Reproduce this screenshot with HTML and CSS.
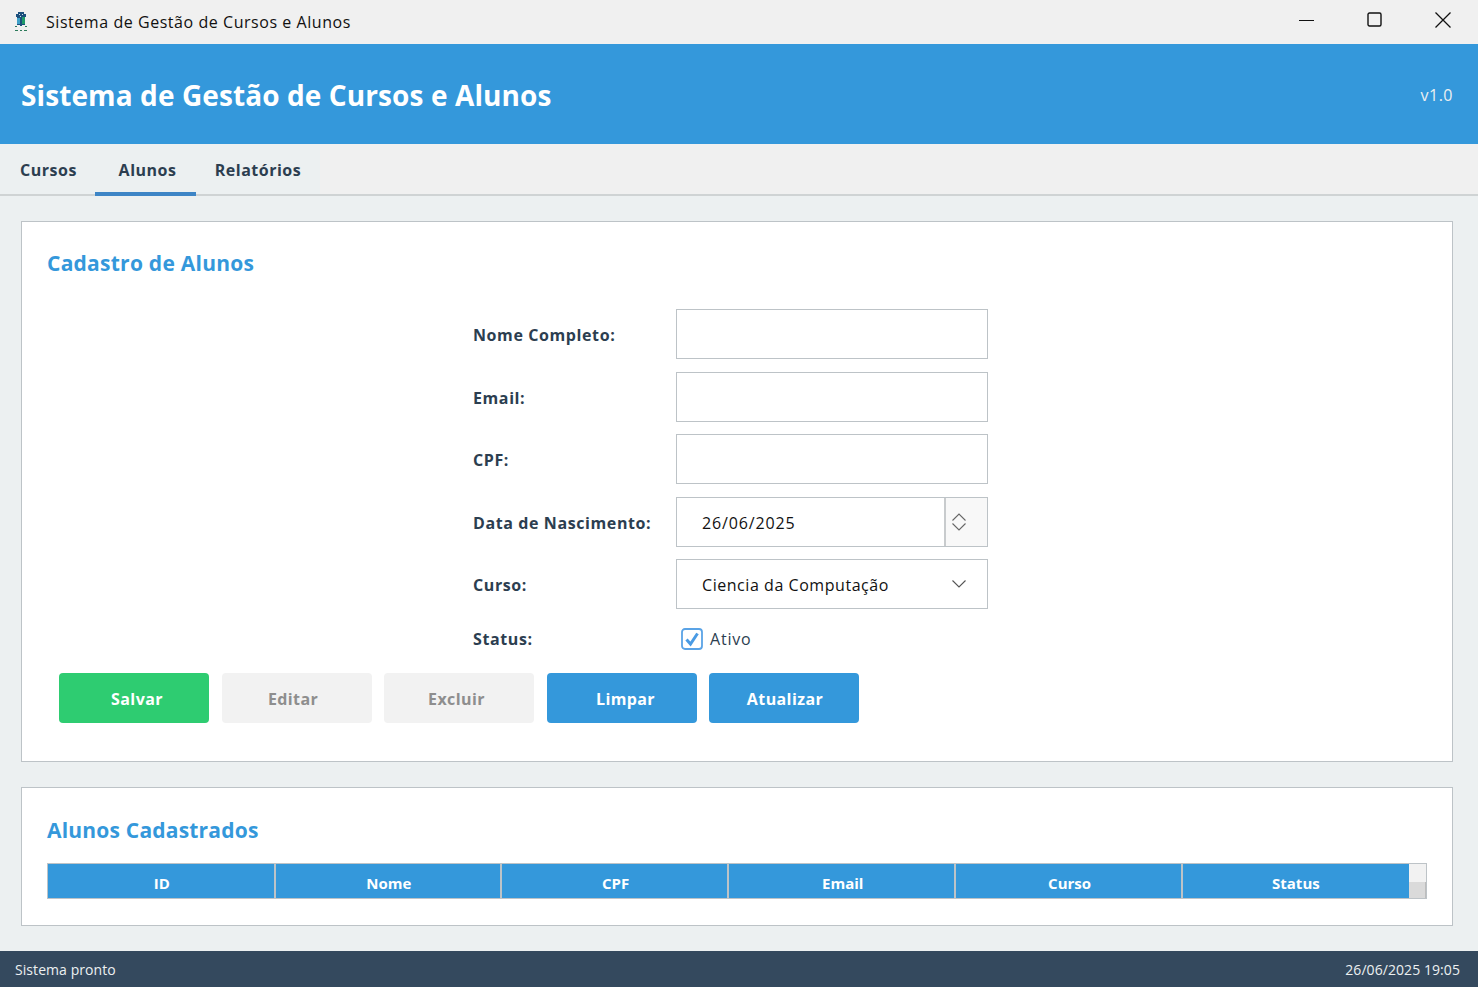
FILE: index.html
```html
<!DOCTYPE html>
<html lang="pt-BR">
<head>
    <meta charset="utf-8">
    <title>Sistema de Gestão de Cursos e Alunos</title>
    <link rel="stylesheet" href="styles.css">
</head>
<body>
    <div class="titlebar">
        <svg class="appicon" width="14" height="20" viewBox="0 0 14 20">
            <path d="M4 0h6v2h2v3h-1v8H8v1H6v-1H3V5H2V2h2z" fill="#1c4f7c"/>
            <path d="M3 6h3v6H3z" fill="#3fa0c8"/>
            <path d="M8 5h3v7H8z" fill="#1f9a6a"/>
            <path d="M5 2h1v1H5zM8 2h1v1H8zM6 4h1v1H6z" fill="#cfe0ea"/>
            <path d="M1 14h2v1H1zM11 14h2v1h-2zM1 18h3v1H1zM6 18h2v1H6zM10 18h3v1h-3z" fill="#2c7a5a"/>
        </svg>
        <span class="titlebar-text">Sistema de Gestão de Cursos e Alunos</span>
        <div class="winbuttons">
            <svg width="16" height="16" viewBox="0 0 16 16"><path d="M0 8.5h15" stroke="#111" fill="none"/></svg>
            <svg width="16" height="16" viewBox="0 0 16 16"><rect x="1" y="1" width="13" height="13" rx="1.5" stroke="#111" stroke-width="1.4" fill="none"/></svg>
            <svg width="16" height="16" viewBox="0 0 16 16"><path d="M0.5 0.5l15 15M15.5 0.5l-15 15" stroke="#111" stroke-width="1.3" fill="none"/></svg>
        </div>
    </div>

    <header class="header">
        <h1>Sistema de Gestão de Cursos e Alunos</h1>
        <span class="version">v1.0</span>
    </header>

    <nav class="tabs">
        <div class="tabgroup">
            <a class="tab tab-cursos">Cursos</a>
            <a class="tab tab-alunos active">Alunos</a>
            <a class="tab tab-relatorios">Relatórios</a>
        </div>
    </nav>

    <main class="content">
        <section class="card card-form">
            <h2>Cadastro de Alunos</h2>
            <div class="form">
                <label>Nome Completo:</label>
                <div class="input"></div>
                <label>Email:</label>
                <div class="input"></div>
                <label>CPF:</label>
                <div class="input"></div>
                <label>Data de Nascimento:</label>
                <div class="input input-date">
                    <span class="value">26/06/2025</span>
                    <span class="spin">
                        <svg width="16" height="20" viewBox="0 0 16 20"><path d="M1.5 8.5L8 2l6.5 6.5M1.5 11.5L8 18l6.5-6.5" stroke="#666" stroke-width="1.1" fill="none"/></svg>
                    </span>
                </div>
                <label>Curso:</label>
                <div class="input input-select">
                    <span class="value">Ciencia da Computação</span>
                    <svg width="16" height="10" viewBox="0 0 16 10"><path d="M1.5 1.5L8 8l6.5-6.5" stroke="#555" stroke-width="1.1" fill="none"/></svg>
                </div>
                <label class="label-status">Status:</label>
                <div class="check">
                    <svg width="22" height="22" viewBox="0 0 22 22">
                        <rect x="1" y="1" width="20" height="20" rx="3" fill="#fff" stroke="#5aa3e6" stroke-width="1.8"/>
                        <path d="M5.5 11.5l4 4.5 7-10.5" stroke="#4a9be4" stroke-width="3" fill="none"/>
                    </svg>
                    <span>Ativo</span>
                </div>
            </div>
            <div class="buttons">
                <button class="btn btn-green btn-salvar">Salvar</button>
                <button class="btn btn-off btn-editar">Editar</button>
                <button class="btn btn-off btn-excluir">Excluir</button>
                <button class="btn btn-blue btn-limpar">Limpar</button>
                <button class="btn btn-blue btn-atualizar">Atualizar</button>
            </div>
        </section>

        <section class="card card-table">
            <h2>Alunos Cadastrados</h2>
            <div class="tablehead">
                <div class="th">ID</div>
                <div class="th">Nome</div>
                <div class="th">CPF</div>
                <div class="th">Email</div>
                <div class="th">Curso</div>
                <div class="th">Status</div>
                <div class="scrollcorner"><span></span></div>
            </div>
        </section>
    </main>

    <footer class="statusbar">
        <span>Sistema pronto</span>
        <span>26/06/2025 19:05</span>
    </footer>
</body>
</html>
```

FILE: styles.css
```css
* {
    box-sizing: border-box;
}

html, body {
    margin: 0;
    height: 987px;
    overflow: hidden;
}

body {
    display: flex;
    flex-direction: column;
    font-family: "Open Sans", "Noto Sans", sans-serif;
    background-color: #ECF0F1;
    color: #2C3E50;
}

.titlebar {
    height: 44px;
    flex: none;
    display: flex;
    align-items: center;
    background-color: #F0F0F0;
    color: #111;
    font-size: 16px;
}

.appicon {
    margin-left: 14px;
}

.titlebar-text {
    margin-left: 18px;
    padding-bottom: 1px;
    letter-spacing: 0.55px;
}

.winbuttons {
    margin-left: auto;
    margin-right: 27px;
    display: flex;
    align-items: center;
    gap: 52px;
    padding-bottom: 4px;
}

.header {
    height: 100px;
    flex: none;
    display: flex;
    align-items: center;
    justify-content: space-between;
    padding: 2px 25px 0 21px;
    background-color: #3498DB;
    color: #FFFFFF;
}

h1 {
    margin: 0;
    font-size: 28px;
    font-weight: 700;
    letter-spacing: 0.1px;
}

.version {
    font-size: 16px;
    letter-spacing: 0.5px;
    color: #ECF0F1;
}

.tabs {
    height: 52px;
    flex: none;
    background-color: #F0F0F0;
    border-bottom: 2px solid #CFD3D4;
}

.tabgroup {
    width: 320px;
    height: 50px;
    display: flex;
    background-color: #ECF0F1;
}

.tab {
    display: flex;
    align-items: center;
    justify-content: center;
    font-size: 16px;
    font-weight: 700;
    letter-spacing: 0.5px;
    color: #2C3E50;
    padding-top: 2px;
}

.tab-cursos {
    width: 95px;
    padding-left: 2px;
}

.tab-alunos {
    width: 101px;
    padding-left: 4px;
}

.tab-relatorios {
    width: 124px;
}

.tab.active {
    border-bottom: 4px solid #3D85C6;
    padding-top: 3px;
    height: 52px;
}

.content {
    flex: 1;
    padding: 25px 25px 25px 21px;
    display: flex;
    flex-direction: column;
    gap: 25px;
}

.card {
    background-color: #FFFFFF;
    border: 1px solid #BDC3C7;
}

.card-form {
    height: 541px;
    padding: 24px 25px 0 25px;
}

.card-table {
    height: 139px;
    padding: 25px 25px 0 25px;
}

h2 {
    margin: 0;
    height: 34px;
    font-size: 21px;
    line-height: 34px;
    font-weight: 700;
    letter-spacing: 0.25px;
    color: #3498DB;
}

.card-table h2 {
    letter-spacing: 0.2px;
}

.form {
    margin-top: 29px;
    margin-left: 426px;
    display: grid;
    grid-template-columns: 203px 312px;
    grid-template-rows: repeat(5, 50px) 35px;
    row-gap: 12.5px;
    align-items: center;
}

.form label {
    font-size: 16px;
    font-weight: 700;
    letter-spacing: 0.6px;
    color: #2C3E50;
    padding-top: 2px;
}

.form .label-status {
    padding-top: 0;
}

.input {
    height: 50px;
    background-color: #FFFFFF;
    border: 1px solid #BDC3C7;
    font-size: 16px;
    letter-spacing: 0.55px;
    color: #111;
    display: flex;
    align-items: center;
}

.input .value {
    margin-left: 25px;
    padding-top: 2px;
}

.input-date {
    justify-content: space-between;
    letter-spacing: 0.85px;
}

.spin {
    width: 43px;
    height: 48px;
    flex: none;
    display: flex;
    align-items: center;
    justify-content: flex-start;
    padding-left: 5px;
    background-color: #F8F8F8;
    border-left: 2px solid #C8CBCD;
}

.input-select {
    justify-content: space-between;
    padding-right: 20px;
}

.check {
    display: flex;
    align-items: center;
    gap: 7px;
    margin-left: 5px;
    font-size: 16px;
    letter-spacing: 0.8px;
    color: #2C3E50;
}

.buttons {
    margin-top: 16.5px;
    margin-left: 12px;
    display: flex;
    gap: 12.5px;
}

.btn {
    width: 150px;
    height: 50px;
    border: none;
    border-radius: 4px;
    font-family: inherit;
    font-size: 16px;
    font-weight: 700;
    letter-spacing: 0.4px;
    padding: 2px 0 0 0;
}

.btn-green {
    background-color: #2ECC71;
    color: #FFFFFF;
}

.btn-blue {
    background-color: #3498DB;
    color: #FFFFFF;
}

.btn-off {
    background-color: #F2F2F2;
    color: #8E8E8E;
}

.btn-salvar {
    padding-left: 6px;
}

.btn-editar {
    padding-right: 7px;
}

.btn-excluir {
    padding-right: 5px;
}

.btn-limpar {
    padding-left: 8px;
}

.btn-atualizar {
    padding-left: 2px;
}

.tablehead {
    margin-top: 16px;
    height: 36px;
    display: flex;
    border: 1px solid #BDC3C7;
    background-color: #3498DB;
}

.th {
    width: 226.8px;
    display: flex;
    align-items: center;
    justify-content: center;
    font-size: 15px;
    font-weight: 700;
    color: #FFFFFF;
    border-right: 2px solid #BDC3C7;
    padding-top: 4px;
    padding-left: 2px;
}

.th:first-child {
    width: 227.8px;
}

.th:nth-child(2) {
    width: 226.2px;
}

.th:nth-child(3) {
    width: 227.4px;
}

.th:nth-child(6) {
    border-right: none;
    width: 225.8px;
    padding-left: 0;
}

.scrollcorner {
    flex: 1;
    background-color: #F2F2F2;
    display: flex;
    align-items: flex-end;
}

.scrollcorner span {
    display: block;
    width: 100%;
    height: 16px;
    background-color: #DADADA;
    border-right: 1px solid #BDBDBD;
}

.statusbar {
    height: 36px;
    flex: none;
    display: flex;
    align-items: center;
    justify-content: space-between;
    padding: 0 18px 0 15px;
    background-color: #34495E;
    color: #ECF0F1;
    font-size: 14px;
    letter-spacing: 0.07px;
}
```
